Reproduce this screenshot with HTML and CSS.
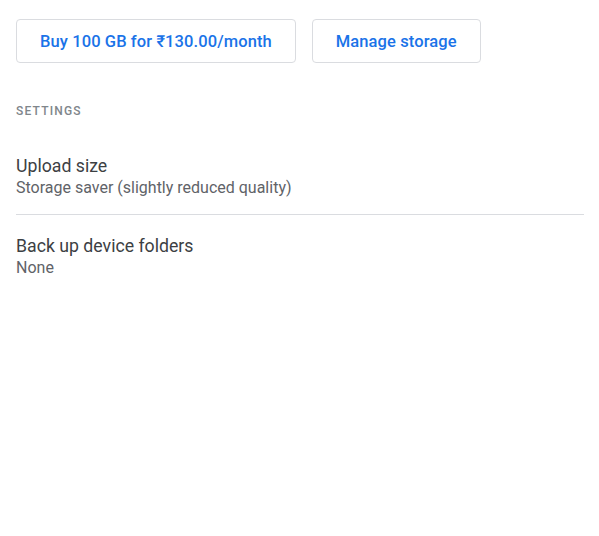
FILE: index.html
```html
<!DOCTYPE html>
<html>
<head>
<meta charset="utf-8">
<link rel="stylesheet" href="styles.css">
</head>
<body>
<div class="page">
  <div class="actions">
    <button class="btn">Buy 100 GB for ₹130.00/month</button>
    <button class="btn">Manage storage</button>
  </div>
  <div class="section-title">SETTINGS</div>
  <div class="list">
    <div class="item">
      <div class="item-title">Upload size</div>
      <div class="item-sub">Storage saver (slightly reduced quality)</div>
    </div>
    <div class="item">
      <div class="item-title">Back up device folders</div>
      <div class="item-sub">None</div>
    </div>
  </div>
</div>
</body>
</html>
```
FILE: styles.css
```css
html, body {
  margin: 0;
  padding: 0;
  background: #fff;
}
body {
  font-family: Roboto, "Liberation Sans", sans-serif;
  color: #3c4043;
}
.page {
  padding: 19px 15px 0 16px;
}
.actions {
  display: flex;
  gap: 16px;
}
.btn {
  height: 44px;
  padding: 0 23px;
  background: #fff;
  border: 1px solid #dadce0;
  border-radius: 4px;
  color: #1a73e8;
  font-family: Roboto, "Liberation Sans", sans-serif;
  font-size: 16.5px;
  font-weight: 500;
  letter-spacing: 0.1px;
}
.section-title {
  margin-top: 40px;
  font-size: 12px;
  font-weight: 500;
  letter-spacing: 1.2px;
  color: #80868b;
  line-height: 16px;
}
.list {
  margin-top: 35px;
}
.item {
  padding: 0 0 16px;
}
.item + .item {
  border-top: 1px solid #dadce0;
  padding-top: 19px;
}
.item-title {
  font-size: 17.7px;
  line-height: 24px;
  color: #3c4043;
}
.item-sub {
  font-size: 16px;
  line-height: 20px;
  color: #5f6368;
}
```
